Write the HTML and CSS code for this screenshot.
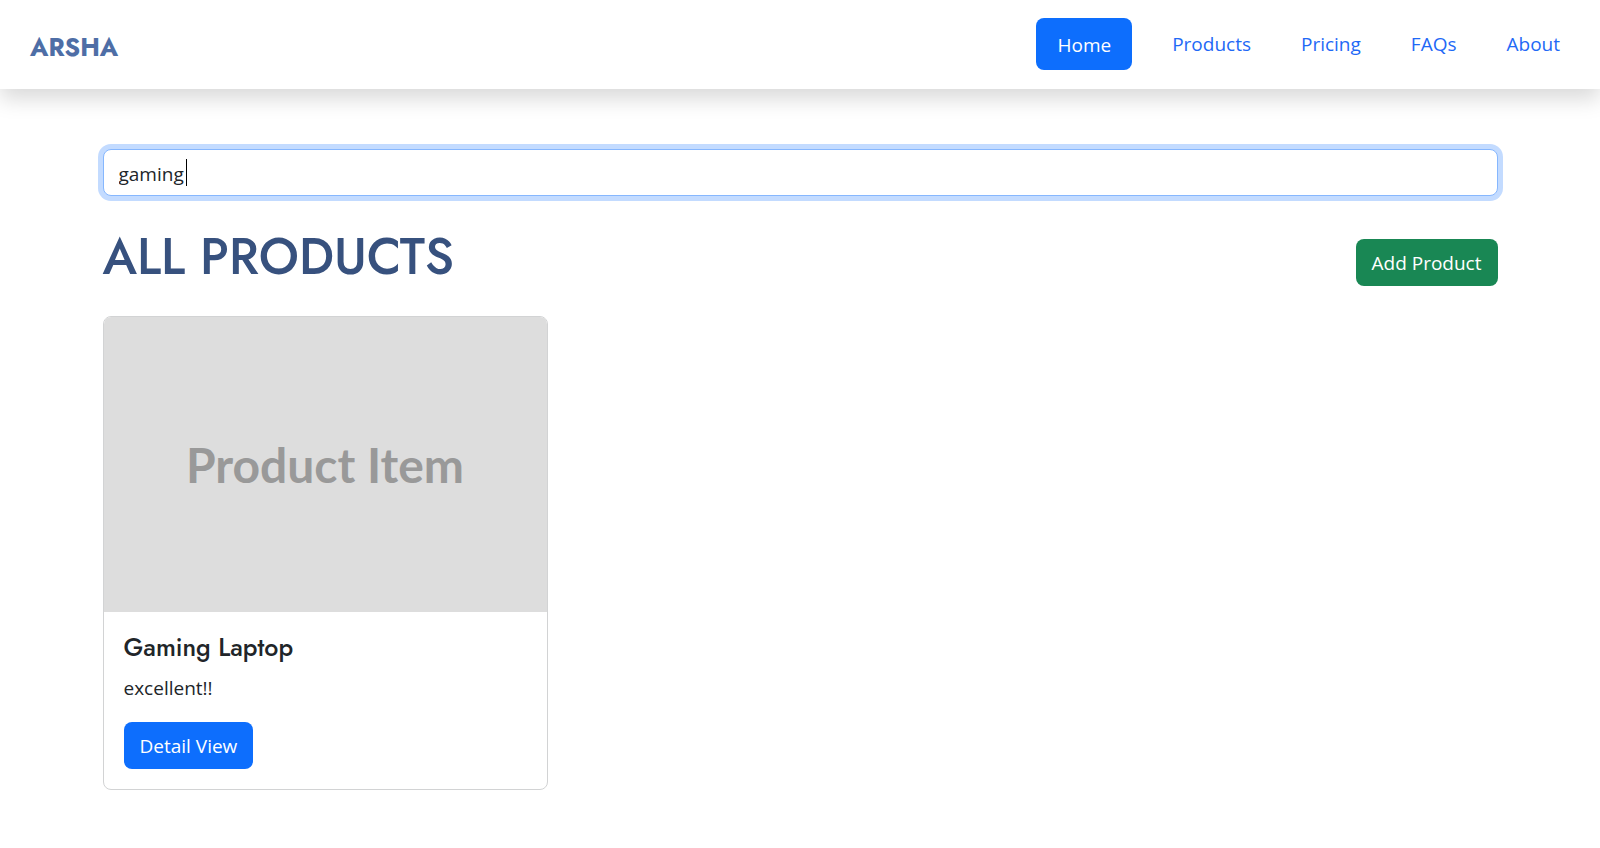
FILE: index.html
```html
<!DOCTYPE html>
<html lang="en">
<head>
<meta charset="utf-8">
<meta name="viewport" content="width=device-width, initial-scale=1">
<title>Arsha - All Products</title>
<link rel="stylesheet" href="styles.css">
</head>
<body>
<header class="header">
  <a class="logo" href="#">ARSHA</a>
  <nav class="nav">
    <a class="nav-link active" href="#">Home</a>
    <a class="nav-link" href="#">Products</a>
    <a class="nav-link" href="#">Pricing</a>
    <a class="nav-link" href="#">FAQs</a>
    <a class="nav-link" href="#">About</a>
  </nav>
</header>
<main class="container">
  <div class="search">
    <input class="search-input" type="text" value="gaming" aria-label="Search products">
    <span class="caret"></span>
  </div>
  <div class="title-row">
    <h1 class="title">ALL PRODUCTS</h1>
    <button class="btn btn-success" type="button">Add Product</button>
  </div>
  <div class="products">
    <article class="card">
      <div class="card-image">Product Item</div>
      <div class="card-body">
        <h2 class="card-title">Gaming Laptop</h2>
        <p class="card-text">excellent!!</p>
        <a class="btn btn-primary" href="#">Detail View</a>
      </div>
    </article>
  </div>
</main>
</body>
</html>
```
FILE: styles.css
```css
* { box-sizing: border-box; }

body {
  margin: 0;
  background: #fff;
  color: #212529;
  font: 19px/30px "Segoe UI", "Open Sans", sans-serif;
}

a { text-decoration: none; }

.header {
  display: flex;
  align-items: center;
  justify-content: space-between;
  padding: 18px 30px 19px;
  background: #fff;
  box-shadow: 0 10px 20px rgba(0, 0, 0, 0.15);
}

.logo {
  color: #4e6ea6;
  font: 700 25px/38px Jost, Lato, sans-serif;
  padding-top: 6px;
}

.nav {
  display: flex;
  align-items: center;
  gap: 30px;
}

.nav-link {
  padding: 0 10px;
  color: #1f69f6;
}

.nav-link.active {
  padding: 12px 21px 10px;
  border-radius: 8px;
  background: #0d6efd;
  color: #fff;
}

.container {
  max-width: 1425px;
  margin: 0 auto;
  padding: 60px 15px;
}

.search { position: relative; }

.search-input {
  display: block;
  width: 100%;
  height: 47px;
  padding: 9px 15px 7px;
  border: 1px solid #86b7fe;
  border-radius: 8px;
  outline: 0;
  box-shadow: 0 0 0 5px #c3dbff;
  color: #212529;
  font: inherit;
}

.caret {
  position: absolute;
  top: 10px;
  left: 83px;
  width: 1px;
  height: 27px;
  background: #000;
}

.title-row {
  display: flex;
  align-items: center;
  justify-content: space-between;
  padding: 31px 0 29px;
}

.title {
  margin: 0;
  color: #37517e;
  font: 500 50px/60px Jost, Lato, sans-serif;
}

.btn {
  display: inline-block;
  padding: 9px 15px 7px;
  border: 1px solid transparent;
  border-radius: 8px;
  color: #fff;
  font: inherit;
  line-height: 29px;
}

.btn-success {
  margin-top: 10px;
  background: #198754;
}

.btn-primary { background: #0d6efd; }

.products {
  display: grid;
  grid-template-columns: repeat(3, 1fr);
  gap: 30px;
}

.card {
  overflow: hidden;
  border: 1px solid #d2d3d4;
  border-radius: 8px;
}

.card-image {
  display: grid;
  place-items: center;
  aspect-ratio: 3 / 2;
  background: #ddd;
  color: #999;
  font: 700 48px/60px Lato, sans-serif;
}

.card-body { padding: 20px; }

.card-title {
  margin: 0 0 11px;
  font: 500 25px/30px Jost, Lato, sans-serif;
}

.card-text { margin: 0 0 19px; }
.card-body .btn { display: block; width: fit-content; }
```
